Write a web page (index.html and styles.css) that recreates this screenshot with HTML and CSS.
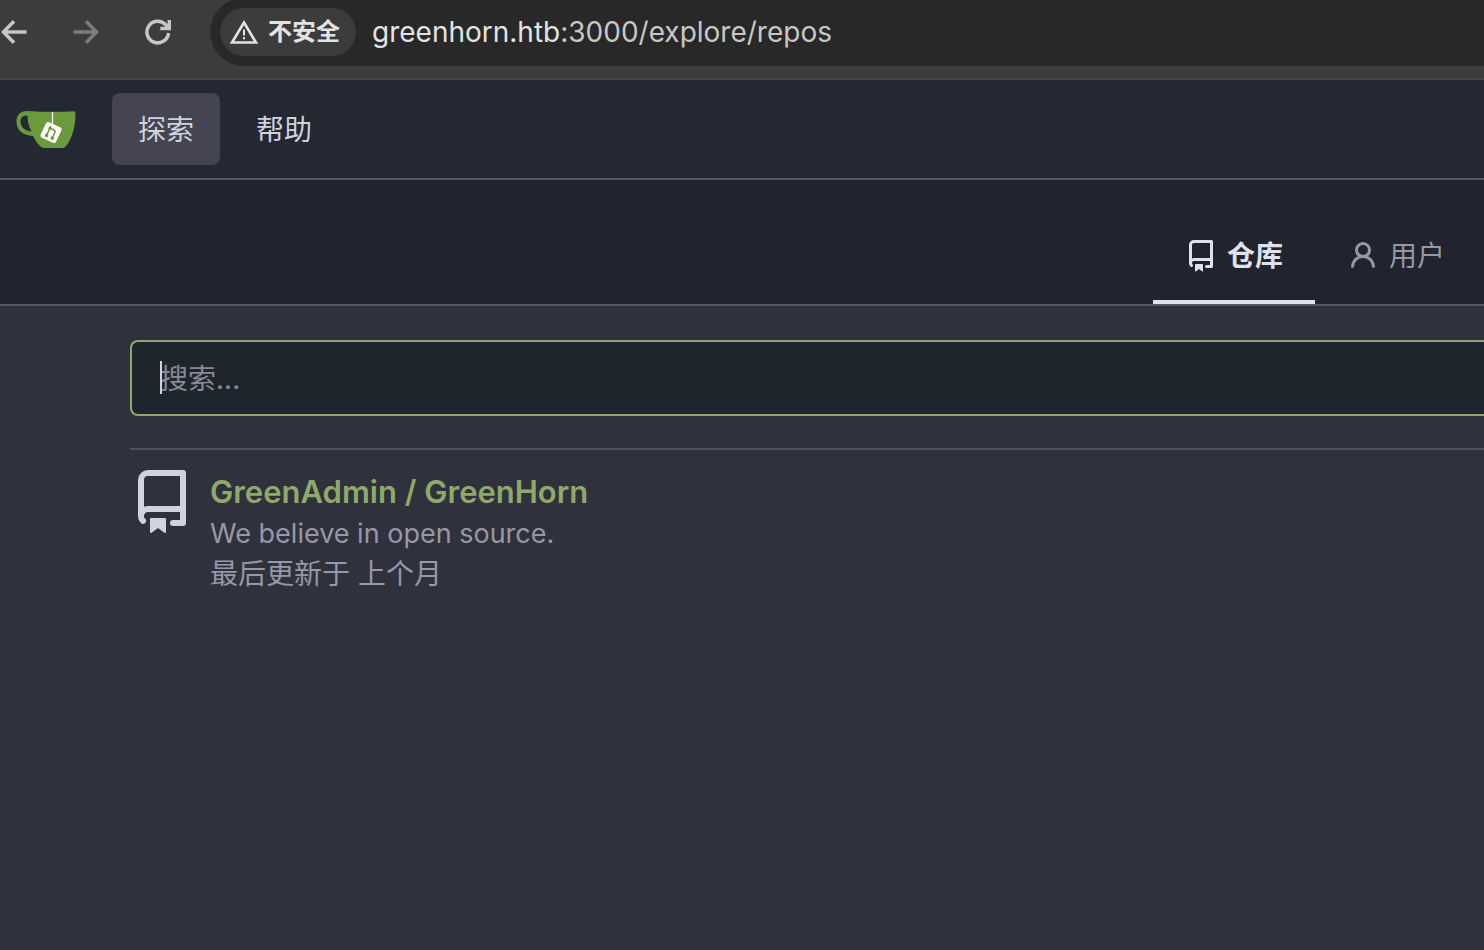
FILE: index.html
```html
<!DOCTYPE html>
<html lang="zh-CN">
<head>
<meta charset="utf-8">
<title>探索 - GreenHorn</title>
<link rel="stylesheet" href="styles.css">
</head>
<body>
<header class="browser">
  <div class="browser-buttons">
    <button class="tool" aria-label="后退"><svg width="28" height="28" viewBox="0 0 28 28"><path d="M26.500 14H4.500M14 3.200 3.500 14 14 24.800"/></svg></button>
    <button class="tool tool-off" aria-label="前进" disabled><svg width="28" height="28" viewBox="0 0 28 28"><path d="M1.500 14h22M14 3.200 24.500 14 14 24.800"/></svg></button>
    <button class="tool" aria-label="重新加载"><svg width="28" height="28" viewBox="0 0 28 28"><path d="M24.500 15A10.800 10.800 0 1 1 21.500 6.500L24.500 9.500M25.300 2v8.500h-9"/></svg></button>
  </div>
  <div class="address">
    <button class="security">
      <svg width="30" height="26" viewBox="0 0 30 26"><path d="M15 3.500 3 23.500h24Z" fill="none" stroke="currentColor" stroke-width="2.600"/><path d="M14 10.500h2v6h-2zM14 18h2v2.200h-2z" fill="currentColor"/></svg>
      <span>不安全</span>
    </button>
    <div class="url"><span class="host">greenhorn.htb</span>:3000/explore/repos</div>
  </div>
</header>

<nav class="navbar">
  <a class="logo" href="#" aria-label="首页">
    <svg width="60" height="40" viewBox="0 0 60 40">
      <g transform="translate(0 2)">
        <path fill="#6b9a3c" fill-rule="evenodd" d="M11 0C4 0 .5 4.500 .5 10.500 .5 19 6 24 17 25 19 29.500 22.500 34 25.500 36.300q1 .7 2.500.7h18.500q2 0 3.300-1.700C55.500 29 59.500 16 59.500 2.500Q59.500 .2 57.500.2C45 1.200 25 1 11 0ZM11.500 4.500C11.500 10.500 13 16 15.500 20.500 8 19.500 4.500 15.500 4.500 10.500 4.500 6.500 7 4.500 11.500 4.500Z"/>
        <path d="M36.500 1v12" stroke="#fff" stroke-width="1.200"/>
        <g transform="translate(35 21.500) rotate(25)">
          <rect x="-8.500" y="-8.500" width="17" height="17" rx="2.500" fill="#fff"/>
          <path d="M-2.800-6V4.500M-2.800-3.500H1.500Q3.500-3.500 3.500-1.500V4.500" fill="none" stroke="#6b9a3c" stroke-width="1.500"/>
          <g fill="#6b9a3c"><circle cx="-2.800" cy="-3.500" r="1.600"/><circle cx="-2.800" cy="4.500" r="1.800"/><circle cx="3.500" cy="4.500" r="1.800"/></g>
        </g>
      </g>
    </svg>
  </a>
  <a class="nav-item active" href="#">探索</a>
  <a class="nav-item" href="#">帮助</a>
</nav>

<nav class="tabs">
  <a class="tab active" href="#">
    <svg width="32" height="32" viewBox="0 0 16 16"><path d="M2 2.500A2.500 2.500 0 0 1 4.500 0h8.750a.75.75 0 0 1 .75.75v12.500a.75.75 0 0 1-.75.75h-2.500a.75.75 0 0 1 0-1.500h1.750v-2h-8a1 1 0 0 0-.714 1.700.75.75 0 1 1-1.072 1.050A2.495 2.495 0 0 1 2 11.500Zm10.500-1h-8a1 1 0 0 0-1 1v6.708A2.486 2.486 0 0 1 4.500 9h8ZM5 12.250a.25.25 0 0 1 .25-.25h3.500a.25.25 0 0 1 .25.25v3.250a.25.25 0 0 1-.4.2l-1.450-1.087a.249.249 0 0 0-.3 0L5.400 15.700a.25.25 0 0 1-.4-.2Z"/></svg>
    <span>仓库</span>
  </a>
  <a class="tab" href="#">
    <svg width="32" height="32" viewBox="0 0 16 16"><path d="M10.561 8.073a6.005 6.005 0 0 1 3.432 5.142.75.75 0 1 1-1.498.07 4.500 4.500 0 0 0-8.990 0 .75.75 0 0 1-1.498-.07 6.004 6.004 0 0 1 3.431-5.142 3.999 3.999 0 1 1 5.123 0ZM10.500 5a2.500 2.500 0 1 0-5 0 2.500 2.500 0 0 0 5 0Z"/></svg>
    <span>用户</span>
  </a>
</nav>

<main class="content">
  <form class="search">
    <input class="search-input" type="text" placeholder="搜索..." aria-label="搜索">
    <span class="caret"></span>
  </form>
  <article class="repo">
    <svg class="repo-icon" width="64" height="64" viewBox="0 0 16 16"><path d="M2 2.500A2.500 2.500 0 0 1 4.500 0h8.750a.75.75 0 0 1 .75.75v12.500a.75.75 0 0 1-.75.75h-2.500a.75.75 0 0 1 0-1.500h1.750v-2h-8a1 1 0 0 0-.714 1.700.75.75 0 1 1-1.072 1.050A2.495 2.495 0 0 1 2 11.500Zm10.500-1h-8a1 1 0 0 0-1 1v6.708A2.486 2.486 0 0 1 4.500 9h8ZM5 12.250a.25.25 0 0 1 .25-.25h3.500a.25.25 0 0 1 .25.25v3.250a.25.25 0 0 1-.4.2l-1.450-1.087a.249.249 0 0 0-.3 0L5.400 15.700a.25.25 0 0 1-.4-.2Z"/></svg>
    <div class="repo-text">
      <h2 class="repo-name"><a href="#">GreenAdmin</a> / <a href="#">GreenHorn</a></h2>
      <p class="repo-line description">We believe in open source.</p>
      <p class="repo-line">最后更新于 上个月</p>
    </div>
  </article>
</main>
</body>
</html>
```
FILE: styles.css
```css
* { box-sizing: border-box; }

body {
  margin: 0;
  min-height: 100vh;
  background: #2f313c;
  color: #cfd3df;
  font-family: Inter, "Noto Sans CJK SC", sans-serif;
  font-size: 28px;
  line-height: 40px;
}

a { color: inherit; text-decoration: none; }
button { border: 0; padding: 0; background: none; font: inherit; }
svg { display: block; flex: none; }

.browser {
  display: flex;
  height: 80px;
  overflow: hidden;
  background: #3c3c3c;
  border-bottom: 2px solid #464646;
}
.browser-buttons {
  display: flex;
  gap: 44px;
  width: 210px;
  height: 64px;
  align-items: center;
}
.tool { color: #c7c7c7; }
.tool-off { color: #7c7c7c; }
.tool svg { fill: none; stroke: currentColor; stroke-width: 3.5; }
.address {
  flex: 1;
  display: flex;
  align-items: center;
  gap: 16px;
  height: 68px;
  margin-top: -2px;
  padding-left: 10px;
  background: #282828;
  border-radius: 34px 0 0 34px;
}
.security {
  display: flex;
  align-items: center;
  gap: 9px;
  height: 48px;
  padding: 0 16px 0 9px;
  border-radius: 24px;
  background: #3c3c3c;
  color: #e3e3e3;
  font-size: 24px;
  font-weight: 700;
}
.url { color: #c7c7c7; white-space: nowrap; }
.host { color: #e3e3e3; }

.navbar {
  display: flex;
  align-items: center;
  gap: 10px;
  height: 100px;
  padding: 0 16px;
  background: #242832;
  border-bottom: 2px solid #555866;
}
.logo { margin-right: 26px; }
.nav-item {
  padding: 17px 26px 15px;
  border-radius: 8px;
}
.nav-item.active { background: #444551; }

.tabs {
  display: flex;
  justify-content: flex-end;
  height: 126px;
  padding: 32px 7px 0 0;
  background: #21232e;
  border-bottom: 2px solid #555866;
}
.tab {
  display: flex;
  align-items: center;
  gap: 10px;
  padding: 0 32px;
  border-bottom: 4px solid transparent;
  color: #9698a5;
}
.tab svg, .repo-icon { fill: currentColor; }
.tab.active {
  border-color: #dfe1ec;
  color: #dfe1ec;
  font-weight: 700;
}

.content { padding: 34px 0 0 130px; }
.search {
  position: relative;
  padding-bottom: 32px;
  border-bottom: 2px solid #505361;
}
.search-input {
  display: block;
  width: 100%;
  height: 76px;
  padding: 2px 28px 0;
  border: 2px solid #91a86b;
  border-right: 0;
  border-radius: 8px 0 0 8px;
  outline: 0;
  background: #1f252c;
  color: #cfd3df;
  font: inherit;
}
.search-input::placeholder { color: #878a95; opacity: 1; }
.caret {
  position: absolute;
  left: 30px;
  top: 21px;
  width: 2px;
  height: 33px;
  background: #cfd3df;
}

.repo {
  display: flex;
  gap: 16px;
  padding-top: 20px;
}
.repo-text { padding-top: 2px; }
.repo-name {
  margin: 0 0 2px;
  color: #8fa968;
  font-size: 31px;
  font-weight: 600;
}
.repo-line { margin: 0; color: #9698a5; }
.description { font-size: 27px; }
```
